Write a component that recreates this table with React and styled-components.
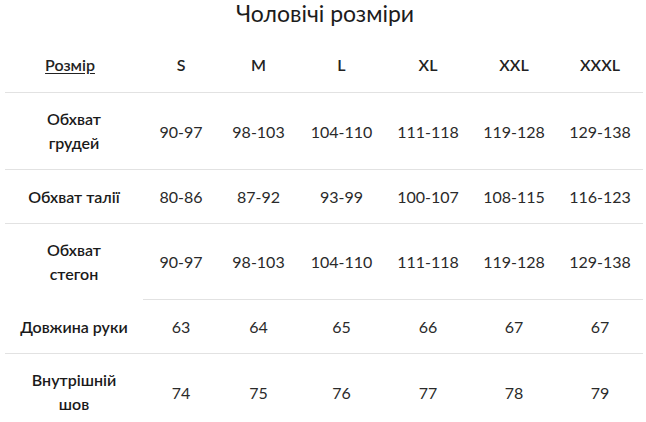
import React from 'react';
import styled, { createGlobalStyle } from 'styled-components';

const GlobalStyle = createGlobalStyle`
    body {
        margin: 0;
        background: #ffffff;
        font-family: Lato, "Open Sans", "Noto Sans", sans-serif;
        color: #222222;
    }
`;

const sizes = ['S', 'M', 'L', 'XL', 'XXL', 'XXXL'];

const rows = [
    { label: ['Обхват', 'грудей'], values: ['90-97', '98-103', '104-110', '111-118', '119-128', '129-138'], height: 76 },
    { label: ['Обхват талії'], values: ['80-86', '87-92', '93-99', '100-107', '108-115', '116-123'], height: 53 },
    { label: ['Обхват', 'стегон'], values: ['90-97', '98-103', '104-110', '111-118', '119-128', '129-138'], height: 75, openLabel: true },
    { label: ['Довжина руки'], values: ['63', '64', '65', '66', '67', '67'], height: 53 },
    { label: ['Внутрішній', 'шов'], values: ['74', '75', '76', '77', '78', '79'], height: 76, last: true },
];

const SizeChart = () => {
    return (
        <Page>
            <GlobalStyle />
            <Title>Чоловічі розміри</Title>
            <Table>
                <Row $height={56}>
                    <Cell $line>
                        <HeadLabel>Розмір</HeadLabel>
                    </Cell>
                    {sizes.map((s) => (
                        <Cell key={s} $line>
                            <HeadSize>{s}</HeadSize>
                        </Cell>
                    ))}
                </Row>
                {rows.map((row, i) => (
                    <Row key={i} $height={row.height}>
                        <Cell $line={!row.last && !row.openLabel}>
                            <Label>
                                {row.label.map((l) => (
                                    <span key={l}>{l}</span>
                                ))}
                            </Label>
                        </Cell>
                        {row.values.map((v, j) => (
                            <Cell key={j} $line={!row.last}>
                                <Value>{v}</Value>
                            </Cell>
                        ))}
                    </Row>
                ))}
            </Table>
        </Page>
    );
};

export default SizeChart;

const Page = styled.div`
    width: 646px;
    padding: 0 3px 0 5px;
    box-sizing: border-box;
`;

const Title = styled.h1`
    margin: 0;
    text-align: center;
    font-size: 23px;
    line-height: 26px;
    font-weight: 400;
    color: #1c1c1c;
    padding-left: 2px;
`;

const Table = styled.div`
    margin-top: 10px;
    display: flex;
    flex-direction: column;
`;

const Row = styled.div`
    display: grid;
    grid-template-columns: 138px 76px 79px 87px 86px 86px 86px;
    height: ${(p) => p.$height + 1}px;
`;

const Cell = styled.div`
    display: flex;
    align-items: center;
    justify-content: center;
    text-align: center;
    border-bottom: 1px solid ${(p) => (p.$line ? '#e2e2e2' : 'transparent')};
`;

const HeadLabel = styled.span`
    font-size: 16px;
    font-weight: 600;
    text-decoration: underline;
    text-underline-offset: 2px;
    margin-left: -8px;
`;

const HeadSize = styled.span`
    font-size: 16px;
    font-weight: 600;
`;

const Label = styled.div`
    display: flex;
    flex-direction: column;
    font-size: 16px;
    line-height: 24px;
    font-weight: 600;
    color: #1a1a1a;
`;

const Value = styled.span`
    font-size: 16px;
    font-weight: 400;
    color: #2a2a2a;
`;
